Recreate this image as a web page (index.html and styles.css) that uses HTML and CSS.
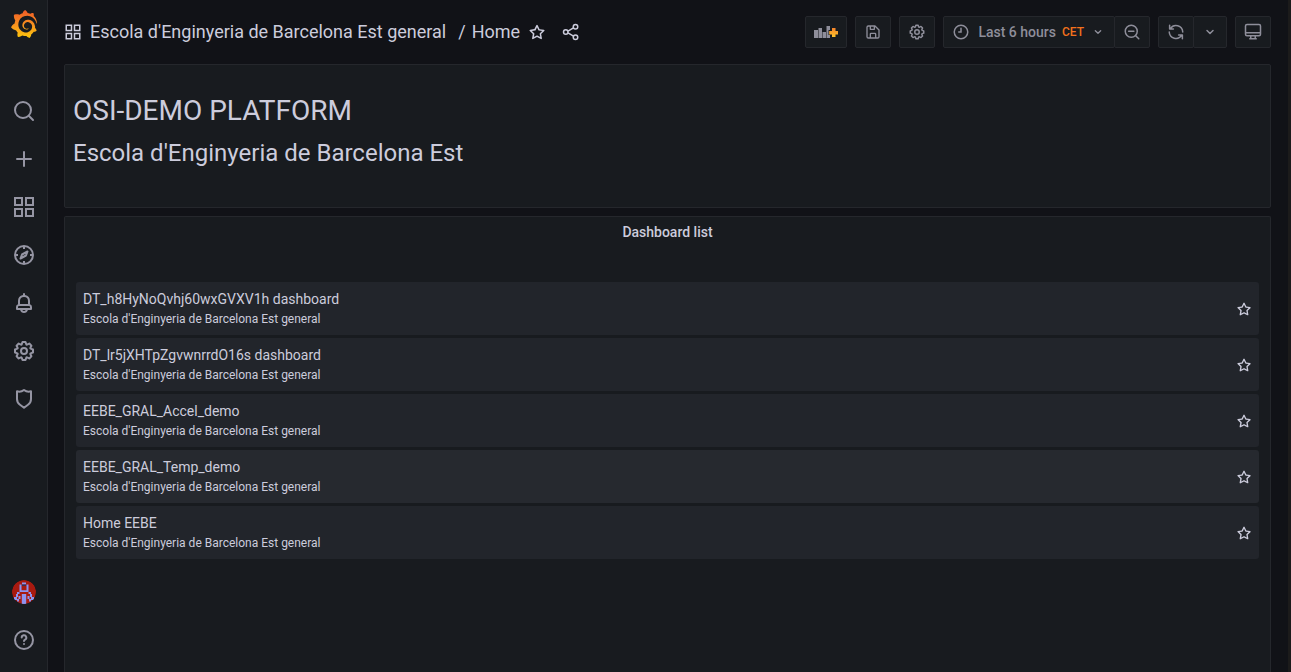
FILE: index.html
```html
<!DOCTYPE html>
<html lang="en">
<head>
<meta charset="utf-8">
<title>Home - Grafana</title>
<link rel="stylesheet" href="styles.css">
</head>
<body>
<svg class="defs" aria-hidden="true">
  <defs>
    <linearGradient id="logo-fill" x1="0" y1="1" x2="0" y2="0">
      <stop offset="0" stop-color="#fcc80c"/>
      <stop offset="0.45" stop-color="#f7941e"/>
      <stop offset="1" stop-color="#f05a28"/>
    </linearGradient>
    <linearGradient id="plus-fill" x1="0" y1="1" x2="0" y2="0">
      <stop offset="0" stop-color="#fcc42c"/>
      <stop offset="1" stop-color="#f5822a"/>
    </linearGradient>
    <symbol id="apps" viewBox="0 0 24 24"><path fill="none" stroke="currentColor" stroke-width="2" d="M3 3h7v7H3zM14 3h7v7h-7zM3 14h7v7H3zM14 14h7v7h-7z"/></symbol>
    <symbol id="cog" viewBox="0 0 24 24"><path fill="currentColor" d="M21.32,9.55l-1.89-.63.89-1.78A1,1,0,0,0,20.13,6L18,3.87a1,1,0,0,0-1.15-.19l-1.78.89-.63-1.89A1,1,0,0,0,13.5,2h-3a1,1,0,0,0-.95.68L8.92,4.57,7.14,3.68A1,1,0,0,0,6,3.87L3.87,6a1,1,0,0,0-.19,1.15l.89,1.78-1.89.63A1,1,0,0,0,2,10.5v3a1,1,0,0,0,.68.95l1.89.63-.89,1.78A1,1,0,0,0,3.87,18L6,20.13a1,1,0,0,0,1.15.19l1.78-.89.63,1.89a1,1,0,0,0,.95.68h3a1,1,0,0,0,.95-.68l.63-1.89,1.78.89A1,1,0,0,0,18,20.13L20.13,18a1,1,0,0,0,.19-1.15l-.89-1.78,1.89-.63A1,1,0,0,0,22,13.5v-3A1,1,0,0,0,21.32,9.55ZM20,12.78l-1.2.4A2,2,0,0,0,17.64,16l.57,1.14-1.1,1.1L16,17.64a2,2,0,0,0-2.79,1.16l-.4,1.2H11.22l-.4-1.2A2,2,0,0,0,8,17.64l-1.14.57-1.1-1.1L6.36,16A2,2,0,0,0,5.2,13.18L4,12.78V11.22l1.2-.4A2,2,0,0,0,6.36,8L5.79,6.89l1.1-1.1L8,6.36A2,2,0,0,0,10.82,5.2l.4-1.2h1.56l.4,1.2A2,2,0,0,0,16,6.36l1.14-.57,1.1,1.1L17.64,8a2,2,0,0,0,1.16,2.79l1.2.4ZM12,8a4,4,0,1,0,4,4A4,4,0,0,0,12,8Zm0,6a2,2,0,1,1,2-2A2,2,0,0,1,12,14Z"/></symbol>
    <symbol id="star" viewBox="0 0 24 24"><path fill="currentColor" d="M22,9.67A1,1,0,0,0,21.14,9l-5.69-.83L12.9,3a1,1,0,0,0-1.8,0L8.55,8.16,2.86,9a1,1,0,0,0-.81.68,1,1,0,0,0,.25,1l4.13,4-1,5.68A1,1,0,0,0,6.9,21.44L12,18.77l5.1,2.67a.93.93,0,0,0,.46.12,1,1,0,0,0,.59-.19,1,1,0,0,0,.4-1l-1-5.68,4.13-4A1,1,0,0,0,22,9.67Zm-6.15,4a1,1,0,0,0-.29.88l.72,4.2-3.76-2a1.06,1.06,0,0,0-.94,0l-3.76,2,.72-4.2a1,1,0,0,0-.29-.88l-3-3,4.21-.61a1,1,0,0,0,.76-.55L12,5.7l1.88,3.82a1,1,0,0,0,.76.55l4.21.61Z"/></symbol>
    <symbol id="angle" viewBox="0 0 24 24"><path fill="none" stroke="currentColor" stroke-width="2" stroke-linecap="round" stroke-linejoin="round" d="M8 10l4 4 4-4"/></symbol>
  </defs>
</svg>
<div class="app">
  <nav class="sidebar" aria-label="Main menu">
    <a class="logo" href="#" aria-label="Grafana home">
      <svg class="logo-mark" viewBox="0 0 24 24"><path fill="url(#logo-fill)" d="M23.02 10.59a8.578 8.578 0 0 0-.862-3.034 8.911 8.911 0 0 0-1.789-2.445c.337-1.342-.413-2.505-.413-2.505-1.292-.08-2.113.4-2.416.62-.052-.02-.102-.044-.154-.064-.22-.089-.446-.172-.677-.247-.231-.073-.47-.14-.711-.197a9.867 9.867 0 0 0-.875-.161C14.557.753 12.94 0 12.94 0c-1.804 1.145-2.147 2.744-2.147 2.744l-.018.093c-.098.029-.2.057-.298.088-.138.042-.275.094-.413.143-.138.055-.275.107-.41.166a8.869 8.869 0 0 0-1.557.87l-.063-.029c-2.497-.955-4.716.195-4.716.195-.203 2.658.996 4.33 1.235 4.636a11.608 11.608 0 0 0-.607 2.635C1.636 12.677.953 15.014.953 15.014c1.926 2.214 4.171 2.351 4.171 2.351.003-.002.006-.002.006-.005.285.509.615.994.986 1.446.156.19.32.371.488.548-.704 2.009.099 3.68.099 3.68 2.144.08 3.553-.937 3.849-1.173a9.784 9.784 0 0 0 3.164.501h.08l.055-.003.107-.002.103-.005.003.002c1.01 1.44 2.788 1.646 2.788 1.646 1.264-1.332 1.337-2.653 1.337-2.94v-.058c0-.02-.003-.039-.003-.06.265-.187.52-.387.758-.6a7.875 7.875 0 0 0 1.415-1.7c1.43.083 2.437-.885 2.437-.885-.236-1.49-1.085-2.216-1.264-2.354l-.018-.013-.016-.013a.217.217 0 0 1-.031-.02c.008-.092.016-.18.02-.27.011-.162.016-.323.016-.48v-.253l-.005-.098-.008-.135a1.891 1.891 0 0 0-.01-.13c-.003-.042-.008-.083-.013-.125l-.016-.124-.018-.122a6.215 6.215 0 0 0-2.032-3.73 6.015 6.015 0 0 0-3.222-1.46 6.292 6.292 0 0 0-.85-.048l-.107.002h-.063l-.044.003-.104.008a4.777 4.777 0 0 0-3.335 1.695c-.332.4-.592.84-.768 1.297a4.594 4.594 0 0 0-.312 1.817l.003.091c.005.055.007.11.013.164a3.615 3.615 0 0 0 .698 1.82 3.53 3.53 0 0 0 1.827 1.282c.33.098.66.14.971.137.039 0 .078 0 .114-.002l.063-.003c.02 0 .041-.003.062-.003.034-.002.065-.007.099-.01.007 0 .018-.003.028-.003l.031-.005.06-.008a1.18 1.18 0 0 0 .112-.02c.036-.008.072-.013.109-.024a2.634 2.634 0 0 0 .914-.415c.028-.02.056-.041.085-.065a.248.248 0 0 0 .039-.35.244.244 0 0 0-.309-.06l-.078.042c-.09.044-.184.083-.283.116a2.476 2.476 0 0 1-.475.096c-.028.003-.054.006-.083.006l-.083.002c-.026 0-.054 0-.08-.002l-.102-.006h-.012l-.024.006c-.016-.003-.031-.003-.044-.006-.031-.002-.06-.007-.091-.01a2.59 2.59 0 0 1-.724-.213 2.557 2.557 0 0 1-.667-.438 2.52 2.52 0 0 1-.805-1.475 2.306 2.306 0 0 1-.029-.444l.006-.122v-.023l.002-.031c.003-.021.003-.04.005-.06a3.163 3.163 0 0 1 1.352-2.29 3.12 3.12 0 0 1 .937-.43 2.946 2.946 0 0 1 .776-.101h.06l.07.002.045.003h.026l.07.005a4.041 4.041 0 0 1 1.635.49 3.94 3.94 0 0 1 1.602 1.662 3.77 3.77 0 0 1 .397 1.414l.005.076.003.075c.002.026.002.05.002.075 0 .024.003.052 0 .07v.065l-.002.073-.008.174a6.195 6.195 0 0 1-.08.639 5.1 5.1 0 0 1-.267.927 5.31 5.31 0 0 1-.624 1.13 5.052 5.052 0 0 1-3.237 2.014 4.82 4.82 0 0 1-.649.066l-.039.003h-.287a6.607 6.607 0 0 1-1.716-.265 6.776 6.776 0 0 1-3.4-2.274 6.75 6.75 0 0 1-.746-1.15 6.616 6.616 0 0 1-.714-2.596l-.005-.083-.002-.02v-.056l-.003-.073v-.096l-.003-.104v-.07l.003-.163c.008-.22.026-.45.054-.678a8.707 8.707 0 0 1 .28-1.355c.128-.444.286-.872.473-1.277a7.04 7.04 0 0 1 1.456-2.1 5.925 5.925 0 0 1 .953-.763c.169-.111.343-.213.524-.306.089-.05.182-.091.273-.135.047-.02.093-.042.138-.062a7.177 7.177 0 0 1 .714-.267l.145-.045c.049-.015.098-.026.148-.041.098-.029.197-.052.296-.076.049-.013.1-.02.15-.033l.15-.032.151-.028.076-.013.075-.01.153-.024c.057-.01.114-.013.171-.023l.169-.021c.036-.003.073-.008.106-.01l.073-.008.036-.003.042-.002c.057-.003.114-.008.171-.01l.086-.006h.023l.037-.003.145-.007a7.999 7.999 0 0 1 1.708.125 7.917 7.917 0 0 1 2.048.68 8.253 8.253 0 0 1 1.672 1.09l.09.077.089.078c.06.052.114.107.171.159.057.052.112.106.166.16.052.055.107.107.159.164a8.671 8.671 0 0 1 1.41 1.978c.012.026.028.052.04.078l.04.078.075.156c.023.051.05.1.07.153l.065.15a8.848 8.848 0 0 1 .45 1.34.19.19 0 0 0 .201.142.186.186 0 0 0 .172-.184c.01-.246.002-.532-.024-.856z"/></svg>
    </a>
    <div class="nav-group">
      <a class="nav-item" href="#" aria-label="Search"><svg class="icon-lg" viewBox="0 0 24 24"><g fill="none" stroke="currentColor" stroke-width="2" stroke-linecap="round"><circle cx="11" cy="11" r="8"/><path d="M17 17l4 4"/></g></svg></a>
      <a class="nav-item" href="#" aria-label="Create"><svg class="icon-lg" viewBox="0 0 24 24"><path fill="none" stroke="currentColor" stroke-width="2" stroke-linecap="round" d="M12 5v14M5 12h14"/></svg></a>
      <a class="nav-item" href="#" aria-label="Dashboards"><svg class="icon-lg"><use href="#apps"/></svg></a>
      <a class="nav-item" href="#" aria-label="Explore"><svg class="icon-lg" viewBox="0 0 24 24"><g fill="none" stroke="currentColor" stroke-width="2" stroke-linejoin="round"><circle cx="12" cy="12" r="9"/><path d="M12 3v3M12 18v3M3 12h3M18 12h3M8.500 15.500l1.500-4 5.500-3-1.500 4z"/></g></svg></a>
      <a class="nav-item" href="#" aria-label="Alerting"><svg class="icon-lg" viewBox="0 0 24 24"><path fill="currentColor" d="M18,13.18V10a6,6,0,0,0-5-5.91V3a1,1,0,0,0-2,0V4.09A6,6,0,0,0,6,10v3.18A3,3,0,0,0,4,16v2a1,1,0,0,0,1,1H8.14a4,4,0,0,0,7.72,0H19a1,1,0,0,0,1-1V16A3,3,0,0,0,18,13.18ZM8,10a4,4,0,0,1,8,0v3H8Zm4,10a2,2,0,0,1-1.720-1h3.440A2,2,0,0,1,12,20Zm6-3H6V16a1,1,0,0,1,1-1H17a1,1,0,0,1,1,1Z"/></svg></a>
      <a class="nav-item" href="#" aria-label="Configuration"><svg class="icon-lg"><use href="#cog"/></svg></a>
      <a class="nav-item" href="#" aria-label="Server admin"><svg class="icon-lg" viewBox="0 0 24 24"><path fill="none" stroke="currentColor" stroke-width="2" stroke-linejoin="round" d="M12 3c-2 1.500-4.500 2-7 1.300v7.600c0 2.600 1.200 4.500 3 5.800l4 3.100 4-3.100c1.800-1.300 3-3.200 3-5.800V4.300c-2.500.7-5 .2-7-1.300z"/></svg></a>
    </div>
    <div class="nav-group nav-bottom">
      <a class="nav-item" href="#" aria-label="Profile">
        <svg class="avatar" viewBox="0 0 24 24"><circle cx="12" cy="12" r="12" fill="#a81a10"/><path fill="#8e92ee" d="M10 2.500h4v2h-4zM7.500 4.500h2v6h-2zM14.500 4.500h2v6h-2zM7.500 10.200h9v1.800h-9zM5 12h2.500v2H5zM16.500 12H19v2h-2.500zM9.800 14h4.400v10H9.800zM4 14h2v3H4zM18 14h2v3h-2zM6.500 16h2v3h-2zM15.500 16h2v3h-2zM2 17h3v3H2zM19 17h3v3h-3zM5 19h2v2.500H5zM17 19h2v2.500h-2z"/><path fill="#30305e" d="M10 4.500h4v1.500h-4z"/></svg>
      </a>
      <a class="nav-item" href="#" aria-label="Help"><svg class="icon-lg" viewBox="0 0 24 24"><g fill="none" stroke="currentColor" stroke-width="2" stroke-linecap="round" stroke-linejoin="round"><circle cx="12" cy="12" r="9"/><path d="M9.700 9.600a2.300 2.300 0 1 1 3.400 2c-.7.400-1.100.8-1.100 1.400M12 16v.1"/></g></svg></a>
    </div>
  </nav>

  <main class="page">
    <header class="toolbar">
      <svg class="icon-md bright title-icon"><use href="#apps"/></svg>
      <div class="crumbs"><a href="#">Escola d'Enginyeria de Barcelona Est general</a><span class="sep">/</span><a href="#">Home</a></div>
      <button class="plain" type="button" aria-label="Mark as favorite"><svg class="icon-md"><use href="#star"/></svg></button>
      <button class="plain share" type="button" aria-label="Share dashboard"><svg class="icon-md" viewBox="0 0 24 24"><g fill="none" stroke="currentColor" stroke-width="2"><circle cx="5" cy="12" r="3"/><circle cx="18" cy="5" r="3"/><circle cx="18" cy="19" r="3"/><path d="M8 10.800l7.300-4.400M8 13.200l7.300 4.400"/></g></svg></button>
      <div class="actions">
        <button class="btn btn-add" type="button" aria-label="Add panel"><svg class="add-icon" viewBox="0 0 24 16"><path fill="currentColor" d="M0 6h4v8H0zM4.500 4h3.500v10H4.500zM8.500 8h3.500v6H8.500zM12.500 2h3.500v4h-1.500v5H16v3h-3.500z"/><path fill="url(#plus-fill)" d="M18 4h3.500v3H24v3.500h-2.500V13H18v-2.500h-2.800V7H18z"/></svg></button>
        <button class="btn" type="button" aria-label="Save dashboard"><svg class="icon-sm" viewBox="0 0 24 24"><path fill="none" stroke="currentColor" stroke-width="2" stroke-linejoin="round" d="M5 3h10l6 6v10a2 2 0 0 1-2 2H5a2 2 0 0 1-2-2V5a2 2 0 0 1 2-2zM8 3v5h6V3M8 21v-6a1 1 0 0 1 1-1h6a1 1 0 0 1 1 1v6"/></svg></button>
        <button class="btn" type="button" aria-label="Dashboard settings"><svg class="icon-md"><use href="#cog"/></svg></button>
        <div class="btn-group">
          <button class="btn btn-time" type="button"><svg class="icon-md" viewBox="0 0 24 24"><g fill="none" stroke="currentColor" stroke-width="2" stroke-linecap="round"><circle cx="12" cy="12" r="9"/><path d="M12 7v5H9"/></g></svg><span>Last 6 hours</span><span class="zone">CET</span><svg class="icon-sm chevron"><use href="#angle"/></svg></button>
          <button class="btn" type="button" aria-label="Zoom out"><svg class="icon-md" viewBox="0 0 24 24"><g fill="none" stroke="currentColor" stroke-width="2" stroke-linecap="round"><circle cx="11" cy="11" r="8"/><path d="M17 17l4 4M7.500 11h7"/></g></svg></button>
        </div>
        <div class="btn-group">
          <button class="btn" type="button" aria-label="Refresh"><svg class="icon-md" viewBox="0 0 24 24"><g fill="none" stroke="currentColor" stroke-width="2" stroke-linecap="round" stroke-linejoin="round"><path d="M4.500 7.500A9 9 0 0 1 21 12M19.500 16.500A9 9 0 0 1 3 12M3.500 3v5h5M20.500 21v-5h-5"/></g></svg></button>
          <button class="btn btn-narrow" type="button" aria-label="Refresh interval"><svg class="icon-md"><use href="#angle"/></svg></button>
        </div>
        <button class="btn" type="button" aria-label="Cycle view mode"><svg class="icon-md" viewBox="0 0 24 24"><path fill="none" stroke="currentColor" stroke-width="2" stroke-linejoin="round" d="M4 2h16a2 2 0 0 1 2 2v11a2 2 0 0 1-2 2H4a2 2 0 0 1-2-2V4a2 2 0 0 1 2-2zM2 13h20M9 17v3M15 17v3M7 21h10"/></svg></button>
      </div>
    </header>

    <section class="panel intro">
      <h1>OSI-DEMO PLATFORM</h1>
      <h2>Escola d'Enginyeria de Barcelona Est</h2>
    </section>

    <section class="panel list-panel">
      <h3>Dashboard list</h3>
      <ul class="dash-list">
        <li><div><a href="#">DT_h8HyNoQvhj60wxGVXV1h dashboard</a><p>Escola d'Enginyeria de Barcelona Est general</p></div><button class="plain" type="button" aria-label="Star dashboard"><svg class="icon-sm"><use href="#star"/></svg></button></li>
        <li><div><a href="#">DT_lr5jXHTpZgvwnrrdO16s dashboard</a><p>Escola d'Enginyeria de Barcelona Est general</p></div><button class="plain" type="button" aria-label="Star dashboard"><svg class="icon-sm"><use href="#star"/></svg></button></li>
        <li><div><a href="#">EEBE_GRAL_Accel_demo</a><p>Escola d'Enginyeria de Barcelona Est general</p></div><button class="plain" type="button" aria-label="Star dashboard"><svg class="icon-sm"><use href="#star"/></svg></button></li>
        <li class="active"><div><a href="#">EEBE_GRAL_Temp_demo</a><p>Escola d'Enginyeria de Barcelona Est general</p></div><button class="plain" type="button" aria-label="Star dashboard"><svg class="icon-sm"><use href="#star"/></svg></button></li>
        <li><div><a href="#">Home EEBE</a><p>Escola d'Enginyeria de Barcelona Est general</p></div><button class="plain" type="button" aria-label="Star dashboard"><svg class="icon-sm"><use href="#star"/></svg></button></li>
      </ul>
    </section>
  </main>
</div>
</body>
</html>
```
FILE: styles.css
```css
* { box-sizing: border-box; }

body {
  margin: 0;
  background: #111217;
  color: #ccccdc;
  font-family: Roboto, "Liberation Sans", sans-serif;
  font-size: 14px;
  line-height: 22px;
}

h1, h2, h3, p, ul { margin: 0; padding: 0; }
a { color: inherit; text-decoration: none; }
button { font: inherit; color: inherit; cursor: pointer; }
svg { display: block; flex: none; }

.defs { position: absolute; width: 0; height: 0; }

.app {
  display: flex;
  height: 100vh;
  overflow: hidden;
  border-right: 3px solid #1c1b1b;
}

.icon-lg { width: 24px; height: 24px; }
.icon-md { width: 18px; height: 18px; }
.icon-sm { width: 16px; height: 16px; }
.bright { color: #ccccdc; }

.sidebar {
  display: flex;
  flex-direction: column;
  flex: none;
  width: 48px;
  background: #181b1f;
  border-right: 1px solid #25272c;
  color: #9595a3;
}
.logo { display: flex; justify-content: center; padding: 10px 0 49px; }
.logo-mark { width: 28px; height: 28px; }
.nav-item {
  display: flex;
  align-items: center;
  justify-content: center;
  height: 48px;
}
.nav-bottom { margin-top: auto; padding-bottom: 8px; }
.avatar { width: 24px; height: 24px; border-radius: 50%; }

.page {
  display: flex;
  flex-direction: column;
  flex: 1;
  min-width: 0;
  padding: 0 17px 0 16px;
}

.toolbar { display: flex; align-items: center; flex: none; height: 64px; }
.title-icon { margin-right: 8px; }
.crumbs { font-size: 18px; white-space: nowrap; }
.sep { margin: 0 6px 0 12px; }
.plain {
  display: flex;
  padding: 0;
  margin-left: 8px;
  border: 0;
  background: none;
}
.share { margin-left: 16px; }

.actions { display: flex; gap: 8px; margin-left: auto; color: #8e8e9a; }
.btn {
  display: flex;
  align-items: center;
  justify-content: center;
  width: 36px;
  height: 32px;
  padding: 0;
  border: 1px solid #25272c;
  border-radius: 2px;
  background: #181b1f;
}
.btn-add { width: 42px; }
.add-icon { width: 24px; height: 16px; }
.btn-group { display: flex; }
.btn-group .btn + .btn { margin-left: -1px; }
.btn-time { width: auto; padding: 0 8px; font-weight: 500; }
.btn-time span { margin-left: 8px; }
.btn-time .zone { margin-left: 6px; font-size: 12px; color: #f2711c; }
.chevron { margin-left: 6px; }
.btn-narrow { width: 34px; }

.panel {
  border: 1px solid #25272c;
  border-radius: 2px;
  background: #181b1f;
}
.intro { flex: none; padding: 28px 8px 38px; }
h1 { font-size: 28px; line-height: 36px; font-weight: 400; margin-bottom: 8px; }
h2 { font-size: 24px; line-height: 32px; font-weight: 400; }

.list-panel { flex: 1; margin-top: 8px; border-bottom: 0; border-radius: 2px 2px 0 0; }
h3 { font-size: 14px; line-height: 30px; font-weight: 500; text-align: center; }

.dash-list { list-style: none; padding: 35px 11px 0; }
.dash-list li {
  display: flex;
  align-items: center;
  justify-content: space-between;
  margin-bottom: 3px;
  padding: 7px 7px 6px;
  border-radius: 3px;
  background: #22252b;
}
.dash-list .active { background: #26292f; }
.dash-list a { display: block; line-height: 20px; }
.dash-list p { font-size: 12px; line-height: 20px; }
```
